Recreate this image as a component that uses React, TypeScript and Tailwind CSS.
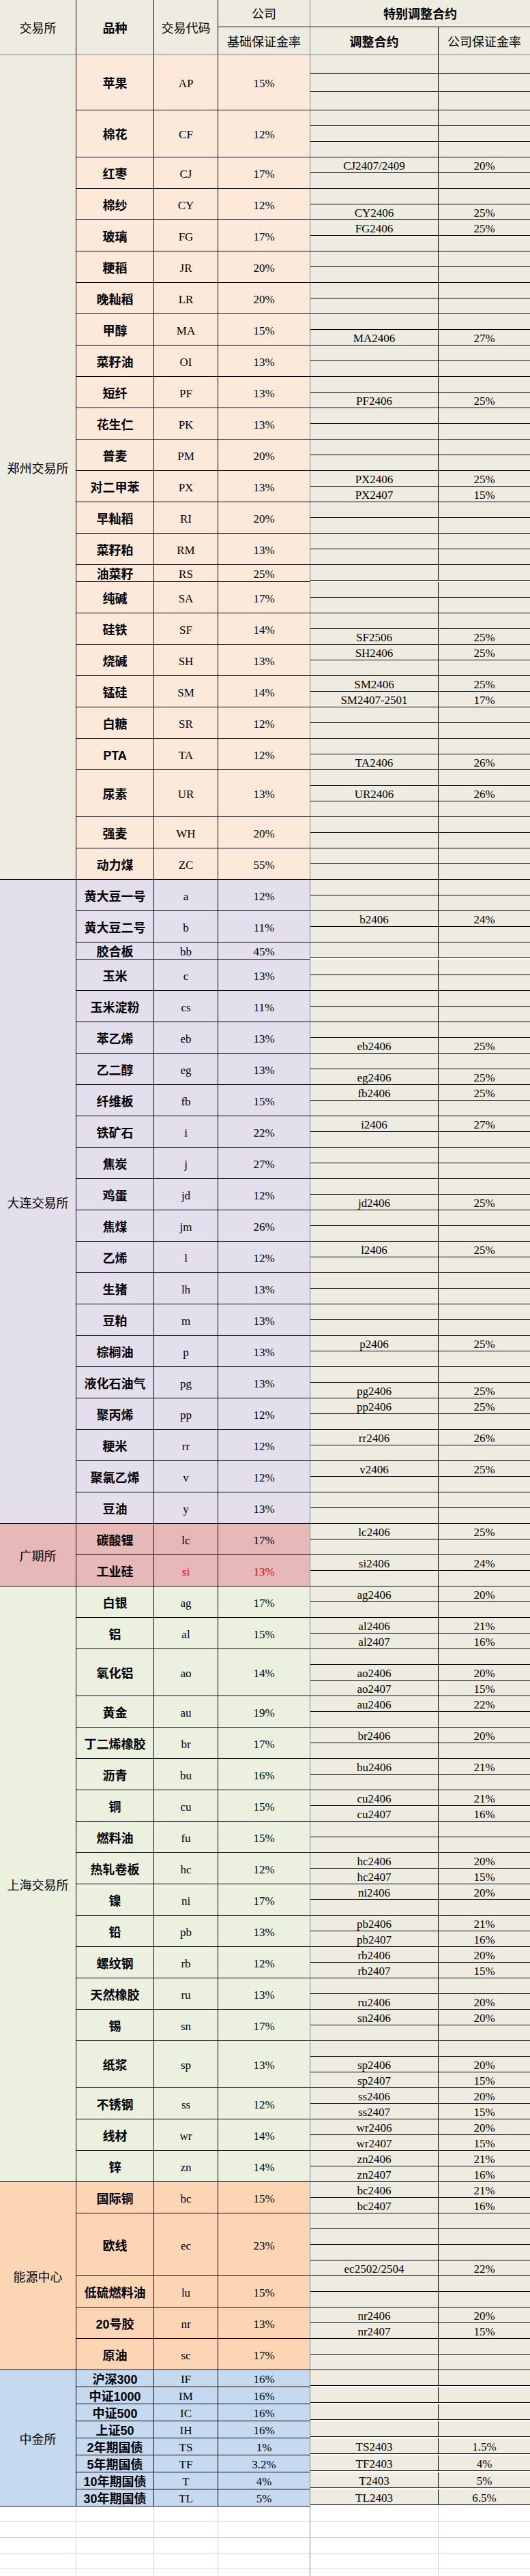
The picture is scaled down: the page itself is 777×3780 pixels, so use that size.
type Sub = [string, string] | null;
type Item = {
  name: string;
  code: string;
  rate: string;
  subs: Sub[];
  tall?: boolean;
  red?: boolean;
};
type Group = { name: string; exBg: string; bg: string; items: Item[] };

const n2: Sub[] = [null, null];
const n1: Sub[] = [null];

const serif = "[font-family:'Liberation_Serif','Noto_Sans_CJK_SC',serif]";
const cjk = "[font-family:'Noto_Sans_CJK_SC',sans-serif]";
const boldName = "[font-family:'Liberation_Sans','Noto_Sans_CJK_SC',sans-serif] font-bold";
const cols = "grid grid-cols-[112px_114px_94px_135px_188px_134px]";

const groups: Group[] = [
  {
    name: "郑州交易所",
    exBg: "bg-[#eeece1]",
    bg: "bg-[#fde9d9]",
    items: [
      { name: "苹果", code: "AP", rate: "15%", subs: [null, null, null], tall: true },
      { name: "棉花", code: "CF", rate: "12%", subs: [null, null, null] },
      { name: "红枣", code: "CJ", rate: "17%", subs: [["CJ2407/2409", "20%"], null] },
      { name: "棉纱", code: "CY", rate: "12%", subs: [null, ["CY2406", "25%"]] },
      { name: "玻璃", code: "FG", rate: "17%", subs: [["FG2406", "25%"], null] },
      { name: "粳稻", code: "JR", rate: "20%", subs: n2 },
      { name: "晚籼稻", code: "LR", rate: "20%", subs: n2 },
      { name: "甲醇", code: "MA", rate: "15%", subs: [null, ["MA2406", "27%"]] },
      { name: "菜籽油", code: "OI", rate: "13%", subs: n2 },
      { name: "短纤", code: "PF", rate: "13%", subs: [null, ["PF2406", "25%"]] },
      { name: "花生仁", code: "PK", rate: "13%", subs: n2 },
      { name: "普麦", code: "PM", rate: "20%", subs: n2 },
      { name: "对二甲苯", code: "PX", rate: "13%", subs: [["PX2406", "25%"], ["PX2407", "15%"]] },
      { name: "早籼稻", code: "RI", rate: "20%", subs: n2 },
      { name: "菜籽粕", code: "RM", rate: "13%", subs: n2 },
      { name: "油菜籽", code: "RS", rate: "25%", subs: n1 },
      { name: "纯碱", code: "SA", rate: "17%", subs: n2 },
      { name: "硅铁", code: "SF", rate: "14%", subs: [null, ["SF2506", "25%"]] },
      { name: "烧碱", code: "SH", rate: "13%", subs: [["SH2406", "25%"], null] },
      { name: "锰硅", code: "SM", rate: "14%", subs: [["SM2406", "25%"], ["SM2407-2501", "17%"]] },
      { name: "白糖", code: "SR", rate: "12%", subs: n2 },
      { name: "PTA", code: "TA", rate: "12%", subs: [null, ["TA2406", "26%"]] },
      { name: "尿素", code: "UR", rate: "13%", subs: [null, ["UR2406", "26%"], null] },
      { name: "强麦", code: "WH", rate: "20%", subs: n2 },
      { name: "动力煤", code: "ZC", rate: "55%", subs: n2 },
    ],
  },
  {
    name: "大连交易所",
    exBg: "bg-[#e4dfec]",
    bg: "bg-[#e4dfec]",
    items: [
      { name: "黄大豆一号", code: "a", rate: "12%", subs: n2 },
      { name: "黄大豆二号", code: "b", rate: "11%", subs: [["b2406", "24%"], null] },
      { name: "胶合板", code: "bb", rate: "45%", subs: n1 },
      { name: "玉米", code: "c", rate: "13%", subs: n2 },
      { name: "玉米淀粉", code: "cs", rate: "11%", subs: n2 },
      { name: "苯乙烯", code: "eb", rate: "13%", subs: [null, ["eb2406", "25%"]] },
      { name: "乙二醇", code: "eg", rate: "13%", subs: [null, ["eg2406", "25%"]] },
      { name: "纤维板", code: "fb", rate: "15%", subs: [["fb2406", "25%"], null] },
      { name: "铁矿石", code: "i", rate: "22%", subs: [["i2406", "27%"], null] },
      { name: "焦炭", code: "j", rate: "27%", subs: n2 },
      { name: "鸡蛋", code: "jd", rate: "12%", subs: [null, ["jd2406", "25%"]] },
      { name: "焦煤", code: "jm", rate: "26%", subs: n2 },
      { name: "乙烯", code: "l", rate: "12%", subs: [["l2406", "25%"], null] },
      { name: "生猪", code: "lh", rate: "13%", subs: n2 },
      { name: "豆粕", code: "m", rate: "13%", subs: n2 },
      { name: "棕榈油", code: "p", rate: "13%", subs: [["p2406", "25%"], null] },
      { name: "液化石油气", code: "pg", rate: "13%", subs: [null, ["pg2406", "25%"]] },
      { name: "聚丙烯", code: "pp", rate: "12%", subs: [["pp2406", "25%"], null] },
      { name: "粳米", code: "rr", rate: "12%", subs: [["rr2406", "26%"], null] },
      { name: "聚氯乙烯", code: "v", rate: "12%", subs: [["v2406", "25%"], null] },
      { name: "豆油", code: "y", rate: "13%", subs: n2 },
    ],
  },
  {
    name: "广期所",
    exBg: "bg-[#e6b8b7]",
    bg: "bg-[#e6b8b7]",
    items: [
      { name: "碳酸锂", code: "lc", rate: "17%", subs: [["lc2406", "25%"], null] },
      { name: "工业硅", code: "si", rate: "13%", subs: [["si2406", "24%"], null], red: true },
    ],
  },
  {
    name: "上海交易所",
    exBg: "bg-[#ebf1de]",
    bg: "bg-[#ebf1de]",
    items: [
      { name: "白银", code: "ag", rate: "17%", subs: [["ag2406", "20%"], null] },
      { name: "铝", code: "al", rate: "15%", subs: [["al2406", "21%"], ["al2407", "16%"]] },
      { name: "氧化铝", code: "ao", rate: "14%", subs: [null, ["ao2406", "20%"], ["ao2407", "15%"]] },
      { name: "黄金", code: "au", rate: "19%", subs: [["au2406", "22%"], null] },
      { name: "丁二烯橡胶", code: "br", rate: "17%", subs: [["br2406", "20%"], null] },
      { name: "沥青", code: "bu", rate: "16%", subs: [["bu2406", "21%"], null] },
      { name: "铜", code: "cu", rate: "15%", subs: [["cu2406", "21%"], ["cu2407", "16%"]] },
      { name: "燃料油", code: "fu", rate: "15%", subs: n2 },
      { name: "热轧卷板", code: "hc", rate: "12%", subs: [["hc2406", "20%"], ["hc2407", "15%"]] },
      { name: "镍", code: "ni", rate: "17%", subs: [["ni2406", "20%"], null] },
      { name: "铅", code: "pb", rate: "13%", subs: [["pb2406", "21%"], ["pb2407", "16%"]] },
      { name: "螺纹钢", code: "rb", rate: "12%", subs: [["rb2406", "20%"], ["rb2407", "15%"]] },
      { name: "天然橡胶", code: "ru", rate: "13%", subs: [null, ["ru2406", "20%"]] },
      { name: "锡", code: "sn", rate: "17%", subs: [["sn2406", "20%"], null] },
      { name: "纸浆", code: "sp", rate: "13%", subs: [null, ["sp2406", "20%"], ["sp2407", "15%"]] },
      { name: "不锈钢", code: "ss", rate: "12%", subs: [["ss2406", "20%"], ["ss2407", "15%"]] },
      { name: "线材", code: "wr", rate: "14%", subs: [["wr2406", "20%"], ["wr2407", "15%"]] },
      { name: "锌", code: "zn", rate: "14%", subs: [["zn2406", "21%"], ["zn2407", "16%"]] },
    ],
  },
  {
    name: "能源中心",
    exBg: "bg-[#fcd5b4]",
    bg: "bg-[#fcd5b4]",
    items: [
      { name: "国际铜", code: "bc", rate: "15%", subs: [["bc2406", "21%"], ["bc2407", "16%"]] },
      { name: "欧线", code: "ec", rate: "23%", subs: [null, null, null, ["ec2502/2504", "22%"]] },
      { name: "低硫燃料油", code: "lu", rate: "15%", subs: n2 },
      { name: "20号胶", code: "nr", rate: "13%", subs: [["nr2406", "20%"], ["nr2407", "15%"]] },
      { name: "原油", code: "sc", rate: "17%", subs: n2 },
    ],
  },
  {
    name: "中金所",
    exBg: "bg-[#c5d9f1]",
    bg: "bg-[#c5d9f1]",
    items: [
      { name: "沪深300", code: "IF", rate: "16%", subs: n1 },
      { name: "中证1000", code: "IM", rate: "16%", subs: n1 },
      { name: "中证500", code: "IC", rate: "16%", subs: n1 },
      { name: "上证50", code: "IH", rate: "16%", subs: n1 },
      { name: "2年期国债", code: "TS", rate: "1%", subs: [["TS2403", "1.5%"]] },
      { name: "5年期国债", code: "TF", rate: "3.2%", subs: [["TF2403", "4%"]] },
      { name: "10年期国债", code: "T", rate: "4%", subs: [["T2403", "5%"]] },
      { name: "30年期国债", code: "TL", rate: "5%", subs: [["TL2403", "6.5%"]] },
    ],
  },
];

function VarietyRow({ item, bg }: { item: Item; bg: string }) {
  const tint = item.red ? "text-[#ff0000]" : "text-black";
  return (
    <div className="flex">
      <div
        className={`w-[114px] shrink-0 border-r border-b border-black flex items-center justify-center pt-[4px] text-[18px] leading-[20px] whitespace-nowrap ${boldName} ${bg}`}
      >
        {item.name}
      </div>
      <div
        className={`w-[94px] shrink-0 border-r border-b border-black flex items-center justify-center pt-[4px] text-[17px] leading-[20px] ${serif} ${tint} ${bg}`}
      >
        {item.code}
      </div>
      <div
        className={`w-[135px] shrink-0 border-r border-r-[#808080] border-b border-b-black flex items-center justify-center pt-[4px] text-[17px] leading-[20px] ${serif} ${tint} ${bg}`}
      >
        {item.rate}
      </div>
      <div className="w-[322px] shrink-0 flex flex-col">
        {item.subs.map((s, i) => (
          <div
            key={i}
            className={`flex ${item.tall ? "h-[27px]" : "h-[23px]"} bg-[#eeece1] border-b border-black text-[17px] leading-[20px] ${serif}`}
          >
            <div className="w-[188px] shrink-0 border-r border-black flex items-center justify-center pt-[4px] whitespace-nowrap">
              {s?.[0]}
            </div>
            <div className="flex-1 flex items-center justify-center pt-[4px]">{s?.[1]}</div>
          </div>
        ))}
      </div>
    </div>
  );
}

function ExchangeGroup({ group }: { group: Group }) {
  return (
    <div className="flex">
      <div
        className={`w-[112px] shrink-0 border-r border-b border-black flex items-center justify-center pt-[2px] text-[18px] ${cjk} ${group.exBg}`}
      >
        {group.name}
      </div>
      <div className="flex flex-col">
        {group.items.map((it) => (
          <VarietyRow key={it.code} item={it} bg={group.bg} />
        ))}
      </div>
    </div>
  );
}

export default function App() {
  const hcell = "flex items-center justify-center text-[18px] whitespace-nowrap";
  return (
    <div className={`w-[777px] h-[3780px] overflow-hidden bg-white text-black ${cjk}`}>
      <div className={`${cols} grid-rows-[40px_40px] border-b border-[#808080] bg-[#eeece1]`}>
        <div className={`row-span-2 border-r border-black ${hcell}`}>交易所</div>
        <div className={`row-span-2 border-r border-black font-bold ${hcell}`}>品种</div>
        <div className={`row-span-2 border-r border-black ${hcell}`}>交易代码</div>
        <div className={`border-r border-r-[#808080] border-b border-b-black ${hcell}`}>公司</div>
        <div className={`col-span-2 border-b border-black font-bold ${hcell}`}>特别调整合约</div>
        <div className={`border-r border-r-[#808080] ${hcell}`}>基础保证金率</div>
        <div className={`border-r border-black font-bold ${hcell}`}>调整合约</div>
        <div className={hcell}>公司保证金率</div>
      </div>

      {groups.map((g) => (
        <ExchangeGroup key={g.name} group={g} />
      ))}

      {Array.from({ length: 6 }).map((_, i) => (
        <div key={i} className={`${cols} h-[23px]`}>
          <div className="border-r border-b border-[#d4d4d4]" />
          <div className="border-r border-b border-[#d4d4d4]" />
          <div className="border-r border-b border-[#d4d4d4]" />
          <div className="border-r border-r-[#808080] border-b border-b-[#d4d4d4]" />
          <div className="border-r border-b border-[#d4d4d4]" />
          <div className="border-b border-[#d4d4d4]" />
        </div>
      ))}
    </div>
  );
}
